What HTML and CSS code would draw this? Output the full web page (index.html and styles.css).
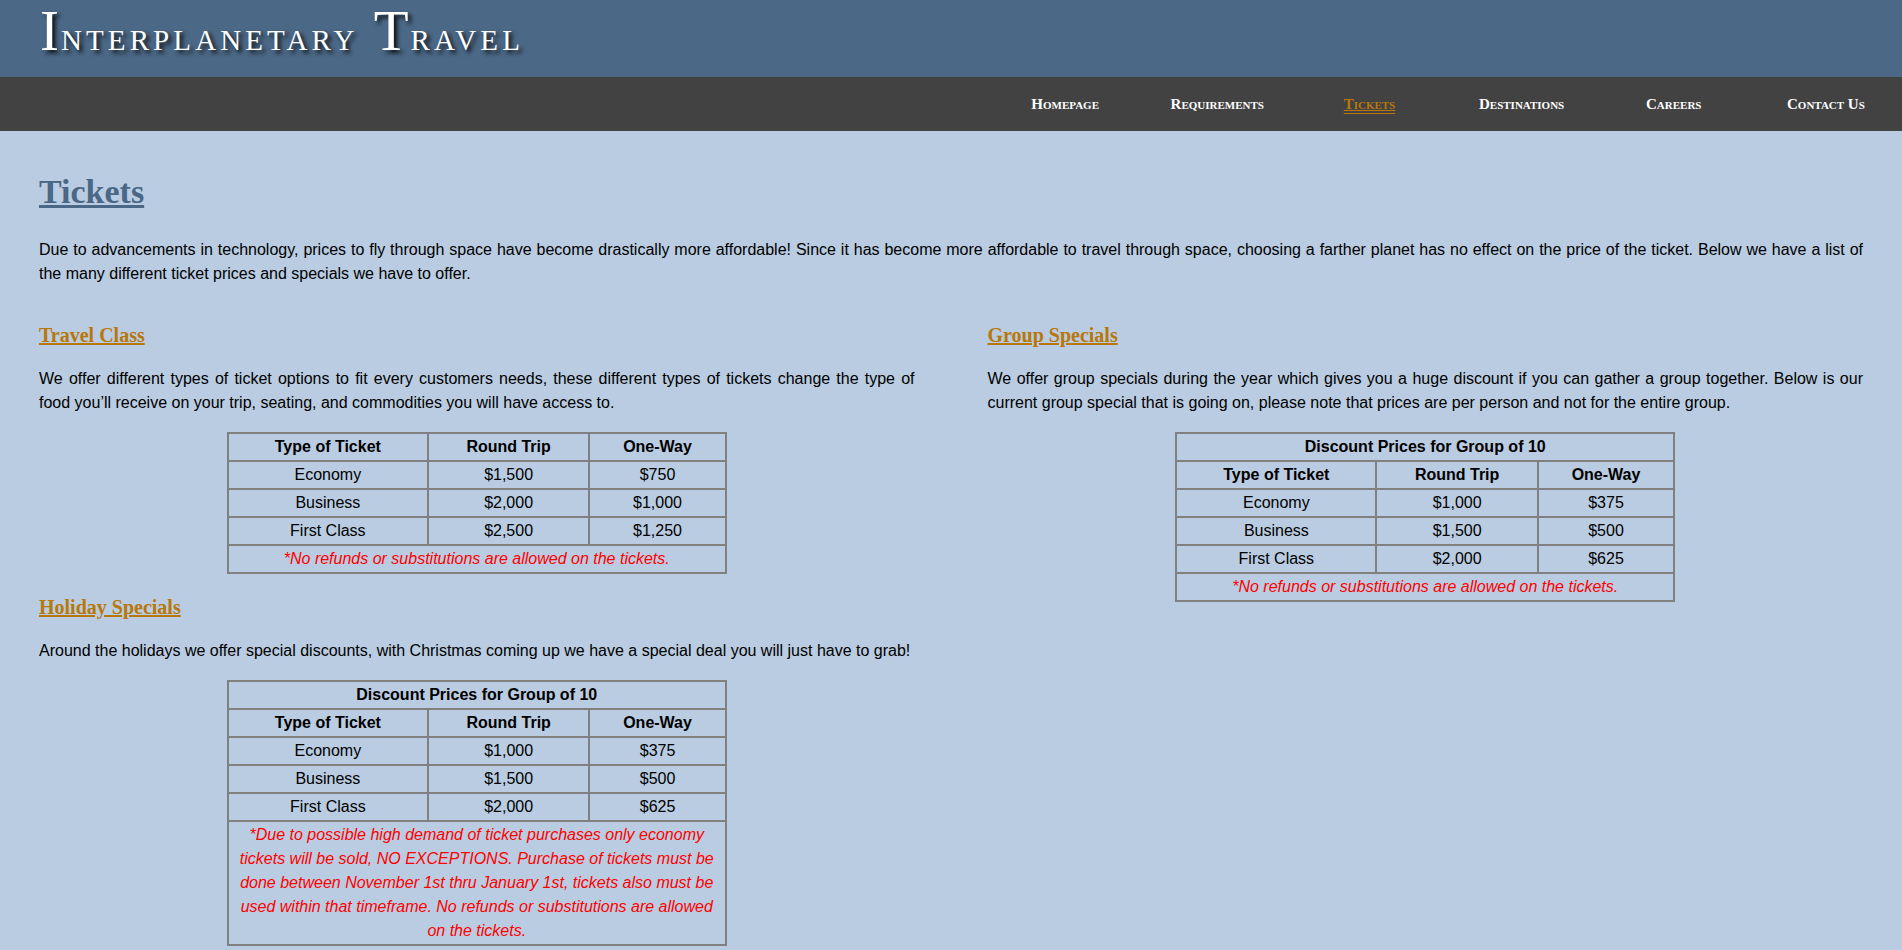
FILE: index.html
```html
<!DOCTYPE html>
<html lang="en">
<head>
<meta charset="utf-8">
<title>Tickets - Interplanetary Travel</title>
<link rel="stylesheet" href="styles.css">
</head>
<body>
<header class="site-header">
  <div class="logo"><span class="big">I</span>nterplanetary <span class="big">T</span>ravel</div>
</header>
<nav class="site-nav">
  <ul>
    <li><a href="#">Homepage</a></li>
    <li><a href="#">Requirements</a></li>
    <li><a href="#" class="current">Tickets</a></li>
    <li><a href="#">Destinations</a></li>
    <li><a href="#">Careers</a></li>
    <li><a href="#">Contact Us</a></li>
  </ul>
</nav>
<main class="content">
  <h1>Tickets</h1>
  <p>Due to advancements in technology, prices to fly through space have become drastically more affordable! Since it has become more affordable to travel through space, choosing a farther planet has no effect on the price of the ticket. Below we have a list of the many different ticket prices and specials we have to offer.</p>
  <div class="columns">
    <section class="col">
      <h2>Travel Class</h2>
      <p>We offer different types of ticket options to fit every customers needs, these different types of tickets change the type of food you’ll receive on your trip, seating, and commodities you will have access to.</p>
      <table class="prices">
        <colgroup><col class="c1"><col class="c2"><col class="c3"></colgroup>
        <tr><th>Type of Ticket</th><th>Round Trip</th><th>One-Way</th></tr>
        <tr><td>Economy</td><td>$1,500</td><td>$750</td></tr>
        <tr><td>Business</td><td>$2,000</td><td>$1,000</td></tr>
        <tr><td>First Class</td><td>$2,500</td><td>$1,250</td></tr>
        <tr><td colspan="3" class="note">*No refunds or substitutions are allowed on the tickets.</td></tr>
      </table>
      <h2>Holiday Specials</h2>
      <p>Around the holidays we offer special discounts, with Christmas coming up we have a special deal you will just have to grab!</p>
      <table class="prices">
        <colgroup><col class="c1"><col class="c2"><col class="c3"></colgroup>
        <tr><th colspan="3">Discount Prices for Group of 10</th></tr>
        <tr><th>Type of Ticket</th><th>Round Trip</th><th>One-Way</th></tr>
        <tr><td>Economy</td><td>$1,000</td><td>$375</td></tr>
        <tr><td>Business</td><td>$1,500</td><td>$500</td></tr>
        <tr><td>First Class</td><td>$2,000</td><td>$625</td></tr>
        <tr><td colspan="3" class="note">*Due to possible high demand of ticket purchases only economy tickets will be sold, NO EXCEPTIONS. Purchase of tickets must be done between November 1st thru January 1st, tickets also must be used within that timeframe. No refunds or substitutions are allowed on the tickets.</td></tr>
      </table>
    </section>
    <section class="col">
      <h2>Group Specials</h2>
      <p>We offer group specials during the year which gives you a huge discount if you can gather a group together. Below is our current group special that is going on, please note that prices are per person and not for the entire group.</p>
      <table class="prices">
        <colgroup><col class="c1"><col class="c2"><col class="c3"></colgroup>
        <tr><th colspan="3">Discount Prices for Group of 10</th></tr>
        <tr><th>Type of Ticket</th><th>Round Trip</th><th>One-Way</th></tr>
        <tr><td>Economy</td><td>$1,000</td><td>$375</td></tr>
        <tr><td>Business</td><td>$1,500</td><td>$500</td></tr>
        <tr><td>First Class</td><td>$2,000</td><td>$625</td></tr>
        <tr><td colspan="3" class="note">*No refunds or substitutions are allowed on the tickets.</td></tr>
      </table>
    </section>
  </div>
</main>
</body>
</html>
```

FILE: styles.css
```css
html, body {
  margin: 0;
  padding: 0;
}
body {
  background: #b9cce1;
  color: #000;
  font-family: "Liberation Sans", Arial, sans-serif;
  font-size: 16px;
}
.site-header {
  background: #4b6886;
  height: 77px;
  padding: 2px 40px 0;
  box-sizing: border-box;
}
.logo {
  font-family: "Liberation Serif", "Times New Roman", serif;
  font-size: 29px;
  line-height: 1;
  text-transform: uppercase;
  letter-spacing: 4.1px;
  word-spacing: 5px;
  color: #fff;
  text-shadow: 3px 3px 4px rgba(0, 0, 0, 0.9);
  white-space: nowrap;
}
.logo .big {
  font-size: 57px;
  letter-spacing: 2px;
}
.site-nav {
  background: #424242;
  height: 54px;
}
.site-nav ul {
  list-style: none;
  margin: 0;
  padding: 0;
  display: flex;
  justify-content: flex-end;
}
.site-nav li {
  width: 8%;
  text-align: center;
}
.site-nav a {
  display: block;
  line-height: 54px;
  font-family: "Liberation Serif", "Times New Roman", serif;
  font-weight: bold;
  font-size: 15px;
  font-variant: small-caps;
  color: #fff;
  text-decoration: none;
  white-space: nowrap;
}
.site-nav a.current {
  color: #b8770b;
  text-decoration: underline double;
}
.content {
  padding: 0 39px 0;
}
h1 {
  font-family: "Liberation Serif", "Times New Roman", serif;
  font-weight: bold;
  font-size: 34px;
  line-height: 40px;
  color: #4a6785;
  text-decoration: underline;
  margin: 41px 0 26px;
}
p {
  margin: 16px 0;
  line-height: 24px;
  text-align: justify;
}
.columns {
  display: flex;
  justify-content: space-between;
  align-items: flex-start;
}
.col {
  width: 48%;
}
h2 {
  font-family: "Liberation Serif", "Times New Roman", serif;
  font-weight: bold;
  font-size: 20px;
  line-height: 24px;
  color: #b8770b;
  text-decoration: underline;
  margin: 21px 0 20px;
}
.prices {
  width: 500px;
  margin: 17px auto 0;
  border-collapse: collapse;
  border: 2px solid #808080;
  line-height: 24px;
  text-align: center;
}
.prices .c1 { width: 201px; }
.prices .c2 { width: 162px; }
.prices .c3 { width: 137px; }
.prices th,
.prices td {
  border: 2px solid #808080;
  padding: 1px;
}
.prices th {
  font-weight: bold;
}
.prices .note {
  color: #ff0000;
  font-style: italic;
}
```
